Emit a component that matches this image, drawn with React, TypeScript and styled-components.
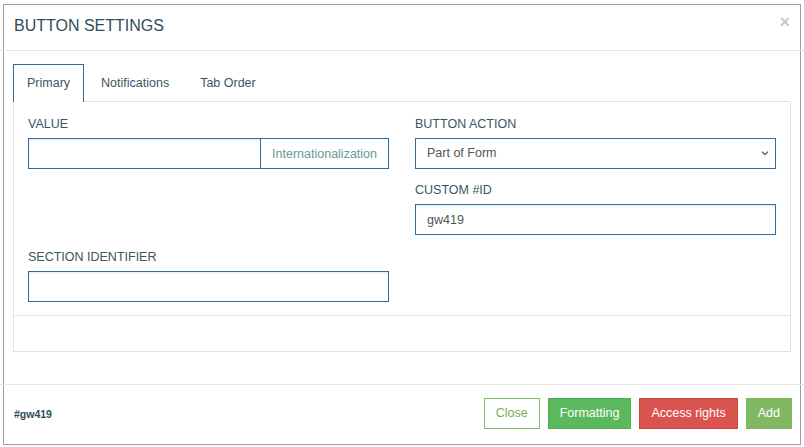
import React from 'react'
import styled, { createGlobalStyle } from 'styled-components'

const GlobalStyle = createGlobalStyle`
  html, body {
    margin: 0;
    padding: 0;
    background: #fff;
  }
  body {
    font-family: 'Liberation Sans', Arial, sans-serif;
    font-size: 12.5px;
    color: #3a5663;
  }
  * { box-sizing: border-box; }
`

const Modal = styled.div`
  margin: 4px 3px 0;
  width: 798px;
  height: 441px;
  border: 1px solid #9e9e9e;
  display: flex;
  flex-direction: column;
`

const Header = styled.div`
  position: relative;
  height: 46px;
  padding: 0 10px 4px 14px;
  display: flex;
  align-items: center;
  border-bottom: 1px solid #e5e5e5;
  margin: 0 -4px;
`

const Title = styled.h4`
  margin: 0;
  font-size: 16px;
  font-weight: normal;
  color: #2f4c5a;
`

const CloseX = styled.button`
  position: absolute;
  right: 14px;
  top: 7px;
  border: 0;
  background: none;
  padding: 0;
  font-family: 'Liberation Sans', Arial, sans-serif;
  font-size: 18px;
  font-weight: bold;
  line-height: 20px;
  color: #c9c9c9;
  cursor: pointer;
`

const Body = styled.div`
  flex: 1;
  padding: 13px 9px 0 9px;
`

const TabList = styled.div`
  display: flex;
  height: 37px;
`

const Tab = styled.div<{ $active?: boolean }>`
  padding: 0 13px 1px;
  margin-right: 3px;
  display: flex;
  align-items: center;
  height: ${({ $active }) => ($active ? '38px' : '37px')};
  border: 1px solid ${({ $active }) => ($active ? '#2d6da3' : 'transparent')};
  border-bottom: 0;
  background: #fff;
  color: #3a5663;
  position: relative;
  z-index: 1;
  cursor: pointer;
`

const Panel = styled.div`
  border: 1px solid #e2e2e2;
`

const Section = styled.div<{ $plain?: boolean }>`
  padding: ${({ $plain }) => ($plain ? '0' : '15px 14px 13px')};
  height: ${({ $plain }) => ($plain ? '36px' : 'auto')};
  border-top: ${({ $plain }) => ($plain ? '1px solid #e2e2e2' : '0')};
`

const Grid = styled.div`
  display: grid;
  grid-template-columns: 361px 361px;
  column-gap: 26px;
  row-gap: 14px;
`

const Field = styled.div<{ $row: number; $col: number }>`
  grid-row: ${({ $row }) => $row};
  grid-column: ${({ $col }) => $col};
  display: flex;
  flex-direction: column;
  padding-top: ${({ $row }) => ($row === 3 ? '1px' : '0')};
`

const Label = styled.label`
  text-transform: uppercase;
  line-height: 15px;
  margin-bottom: 6px;
  color: #3a5663;
`

const InputGroup = styled.div`
  display: flex;
  height: 31px;
  border: 1px solid #2d6da3;
  box-shadow: inset 0 2px 2px rgba(0, 0, 0, 0.06);
`

const GroupInput = styled.input`
  flex: 1;
  min-width: 0;
  border: 0;
  background: transparent;
  padding: 0 11px;
  font: inherit;
  color: #555;
  outline: none;
`

const Addon = styled.span`
  display: flex;
  align-items: center;
  padding: 0 11px;
  border-left: 1px solid #2d6da3;
  background: #fff;
  color: #6a9798;
`

const TextInput = styled.input`
  height: 31px;
  border: 1px solid #2d6da3;
  box-shadow: inset 0 2px 2px rgba(0, 0, 0, 0.06);
  padding: 0 11px;
  font: inherit;
  color: #555;
  outline: none;
`

const Select = styled.div`
  height: 31px;
  border: 1px solid #2d6da3;
  display: flex;
  align-items: center;
  justify-content: space-between;
  padding: 0 5px 1px 11px;
  color: #555;
  background: #fff;
`

const Footer = styled.div`
  height: 60px;
  margin: 0 -4px;
  border-top: 1px solid #e5e5e5;
  display: flex;
  align-items: center;
  justify-content: space-between;
  padding: 0 12px 2px 14px;
`

const Ref = styled.span`
  font-size: 10.5px;
  font-weight: bold;
  color: #2f4c5a;
`

const Buttons = styled.div`
  display: flex;
  gap: 8px;
`

const tones = {
  outline: { bg: '#fff', border: '#7cbf62', color: '#73b25c' },
  success: { bg: '#5cb85c', border: '#4cae4c', color: '#fff' },
  danger: { bg: '#d9534f', border: '#d43f3a', color: '#fff' },
  add: { bg: '#80b862', border: '#80b862', color: '#fff' },
}

const Button = styled.button<{ $tone: keyof typeof tones }>`
  height: 31px;
  padding: 0 11px 1px;
  font-family: 'Liberation Sans', Arial, sans-serif;
  font-size: 12.5px;
  background: ${({ $tone }) => tones[$tone].bg};
  border: 1px solid ${({ $tone }) => tones[$tone].border};
  color: ${({ $tone }) => tones[$tone].color};
  cursor: pointer;
`

const Chevron = () => (
  <svg width="10" height="8" viewBox="0 0 10 8">
    <polyline points="2,2.8 5,5.6 8,2.8" fill="none" stroke="#666" strokeWidth="1.4" />
  </svg>
)

export default function App() {
  return (
    <>
      <GlobalStyle />
      <Modal>
        <Header>
          <Title>BUTTON SETTINGS</Title>
          <CloseX>×</CloseX>
        </Header>
        <Body>
          <TabList>
            <Tab $active>Primary</Tab>
            <Tab>Notifications</Tab>
            <Tab>Tab Order</Tab>
          </TabList>
          <Panel>
            <Section>
              <Grid>
                <Field $row={1} $col={1}>
                  <Label>Value</Label>
                  <InputGroup>
                    <GroupInput />
                    <Addon>Internationalization</Addon>
                  </InputGroup>
                </Field>
                <Field $row={1} $col={2}>
                  <Label>Button Action</Label>
                  <Select>
                    <span>Part of Form</span>
                    <Chevron />
                  </Select>
                </Field>
                <Field $row={2} $col={2}>
                  <Label>Custom #ID</Label>
                  <TextInput defaultValue="gw419" />
                </Field>
                <Field $row={3} $col={1}>
                  <Label>Section Identifier</Label>
                  <TextInput />
                </Field>
              </Grid>
            </Section>
            <Section $plain />
          </Panel>
        </Body>
        <Footer>
          <Ref>#gw419</Ref>
          <Buttons>
            <Button $tone="outline">Close</Button>
            <Button $tone="success">Formatting</Button>
            <Button $tone="danger">Access rights</Button>
            <Button $tone="add">Add</Button>
          </Buttons>
        </Footer>
      </Modal>
    </>
  )
}
